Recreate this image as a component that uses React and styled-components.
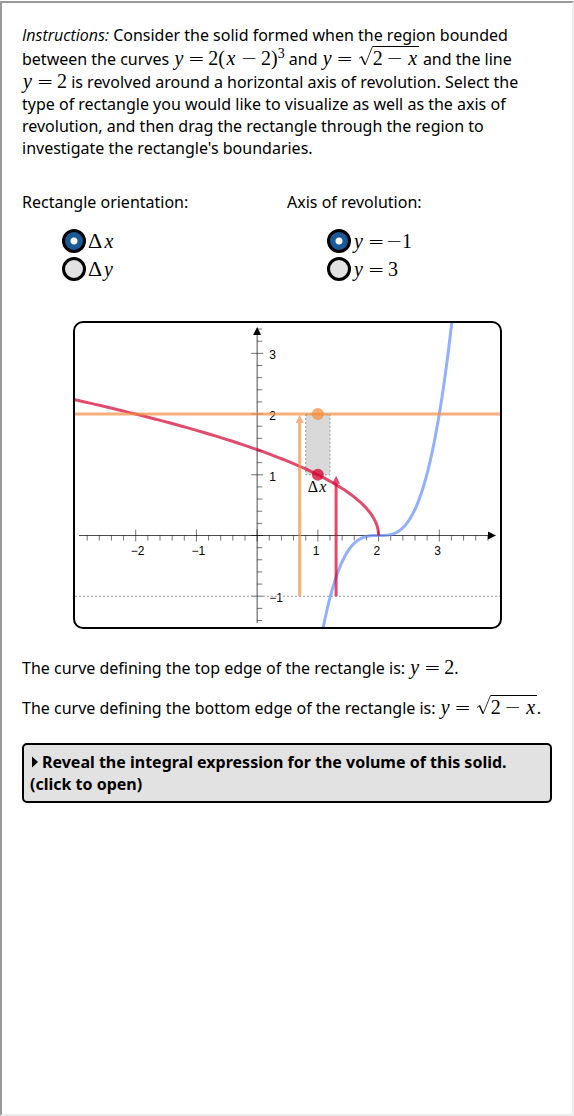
import React, { useState } from "react";
import styled, { createGlobalStyle } from "styled-components";

const GlobalStyle = createGlobalStyle`
  *, *::before, *::after { box-sizing: border-box; }
  body {
    margin: 0;
    padding-top: 1px;
    background: #fff;
    color: #000;
    font: 16px/22px "Noto Sans", "Open Sans", sans-serif;
  }
`;

const Frame = styled.main`
  min-height: calc(100vh - 1px);
  padding: 21px 20px;
  border: 2px solid;
  border-color: #9a9a9a #ededed #ededed #9a9a9a;
`;

const Paragraph = styled.p`
  margin: 0 0 16px;
`;

const Lead = styled.em`
  font-family: "Open Sans", sans-serif;
`;

const Formula = styled.span`
  display: inline-flex;
  align-items: baseline;
  height: ${(p) => (p.$tall ? "24px" : "22px")};
  line-height: ${(p) => (p.$tall ? "24px" : "22px")};
  font-family: "Liberation Serif", serif;
  font-size: 20px;
  white-space: nowrap;
`;

const Variable = styled.i`
  min-width: ${(p) => p.$width}px;
  text-align: center;
`;

const Delta = styled.span`
  width: 15px;
  font-size: 22px;
`;

const Operator = styled.span`
  display: flex;
  justify-content: center;
  width: 16px;
  margin: 0 ${(p) => (p.$unary ? "0 0 -2px" : "4px")};
  font-family: "DejaVu Sans", sans-serif;
  font-weight: 200;
  font-size: 20px;
`;

const Power = styled.sup`
  align-self: flex-start;
  font-size: 14px;
  line-height: 14px;
`;

const Root = styled.span`
  display: inline-flex;
  align-items: baseline;
`;

const RadicalSign = styled.svg`
  width: 16px;
  height: 20px;
  align-self: flex-start;
  flex: none;
`;

const Radicand = styled.span`
  display: inline-flex;
  align-items: baseline;
  border-top: 1px solid #000;
  line-height: 22px;
`;

const Choices = styled.form`
  display: grid;
  grid-template-columns: 1fr 1fr;
  margin-top: 32px;
`;

const ChoiceGroup = styled.fieldset`
  min-width: 0;
  margin: 0;
  padding: 0;
  border: 0;
`;

const GroupTitle = styled.legend`
  padding: 0;
  margin-bottom: 14px;
`;

const Choice = styled.label`
  display: flex;
  align-items: center;
  gap: 2px;
  height: 28px;
  margin-left: 40px;
`;

const Radio = styled.input`
  appearance: none;
  width: 24px;
  height: 24px;
  margin: 0;
  border: 3px solid #000;
  border-radius: 50%;
  background: #e2e2e2;

  &:checked {
    background: radial-gradient(circle, #fff 0 3px, #1a5a99 4px);
  }
`;

const GraphArea = styled.div`
  margin: 38px 0 27px;
  padding: 0 50px 0 51px;
`;

const Graph = styled.svg`
  display: block;
  width: 100%;
  border: 2px solid #000;
  border-radius: 10px;
`;

const TickLabel = styled.text`
  font: 12px "Liberation Sans", Arial, sans-serif;
`;

const WidthLabel = styled.text`
  font: 16px "Liberation Serif", serif;
`;

const Reveal = styled.details`
  margin-top: 24px;
  padding: 6px;
  border: 2px solid #000;
  border-radius: 5px;
  background: #e2e2e2;
  font-weight: 700;
`;

const RevealTitle = styled.summary`
  display: block;
  cursor: pointer;
`;

const Disclosure = styled.svg`
  width: 8px;
  height: 12px;
  margin-right: 4px;
`;

const Y = () => <Variable $width={11}>y</Variable>;
const X = () => <Variable $width={12}>x</Variable>;
const Eq = () => <Operator>=</Operator>;
const Minus = ({ unary }) => <Operator $unary={unary}>−</Operator>;

const SquareRoot = ({ children }) => (
  <Root>
    <RadicalSign viewBox="0 0 16 20" fill="none" stroke="#000" aria-hidden="true">
      <path d="M2 12.5 4.5 10.5" strokeWidth="0.8" />
      <path d="M4.5 10.5 8 18.5" strokeWidth="1.5" />
      <path d="M8 19 15.5 .5H16" strokeWidth="0.8" />
    </RadicalSign>
    <Radicand>{children}</Radicand>
  </Root>
);

const RootFormula = () => (
  <Formula $tall>
    <Y /><Eq /><SquareRoot>2<Minus /><X /></SquareRoot>
  </Formula>
);

const UNIT = 425 / 7;
const px = (x) => (x + 3) * UNIT;
const py = (y) => (3.5 - y) * UNIT;
const range = (from, to, step) =>
  Array.from({ length: Math.round((to - from) / step) + 1 }, (_, i) => from + i * step);
const trace = (points) => "M" + points.map(([x, y]) => `${px(x)} ${py(y)}`).join("L");

const RED = "#d4002d";
const ORANGE = "#f49042";
const BLUE = "#648fff";

const cubic = trace(range(1, 3.3, 0.02).map((x) => [x, 2 * (x - 2) ** 3]));
const root = trace(range(0, 2.3, 0.02).map((y) => [2 - y * y, y]));
const isWhole = (v) => Math.abs(v - Math.round(v)) < 0.01;
const label = (v) => String(v).replace("-", "−");

const Arrow = ({ x, top, color }) => (
  <g opacity="0.7" stroke={color} fill={color}>
    <path d={`M${px(x)} ${py(-1)}V${py(top) + 8}`} strokeWidth="3" />
    <path d={`M${px(x)} ${py(top) + 1}l4 8h-8z`} stroke="none" />
  </g>
);

const RegionGraph = () => (
  <Graph viewBox="0 0 425 304" role="img" aria-label="Region bounded by the two curves and the line">
    <g stroke="#000" strokeOpacity="0.7" fill="none">
      <path d={`M4 ${py(0)}H414`} />
      <path d={`M${px(0)} 300V11`} />
      {range(-2.8, 3.8, 0.2).map((x) => (
        <path key={x} strokeOpacity="0.55" d={`M${px(x)} ${py(0) - (isWhole(x) ? 6 : 0)}V${py(0) + (isWhole(x) ? 6 : 5)}`} />
      ))}
      {range(-1.4, 3.4, 0.2).map((y) => (
        <path key={y} strokeOpacity="0.55" d={`M${px(0) - (isWhole(y) ? 6 : 0)} ${py(y)}H${px(0) + (isWhole(y) ? 6 : 5)}`} />
      ))}
    </g>
    <path d={`M421 ${py(0)}l-8 -4v8z`} />
    <path d={`M${px(0)} 4l4 8h-8z`} />
    {[-2, -1, 1, 2, 3].map((x) => (
      <TickLabel key={x} x={px(x) - 5} y={py(0) + 19}>{label(x)}</TickLabel>
    ))}
    {[-1, 1, 2, 3].map((y) => (
      <TickLabel key={y} x={px(0) + 12} y={py(y) + 6}>{label(y)}</TickLabel>
    ))}
    <path d={`M0 ${py(-1)}H425`} stroke="#999" strokeDasharray="2 2" />
    <rect x={px(0.8)} y={py(2)} width={0.4 * UNIT} height={UNIT} fill="#d9d9d9" stroke="#999" strokeDasharray="2 2" />
    <path d={cubic} fill="none" stroke={BLUE} strokeWidth="3" opacity="0.7" />
    <path d={root} fill="none" stroke={RED} strokeWidth="3" opacity="0.7" />
    <path d={`M0 ${py(2)}H425`} stroke={ORANGE} strokeWidth="3" opacity="0.7" />
    <Arrow x={0.7} top={2} color={ORANGE} />
    <Arrow x={1.3} top={1} color={RED} />
    <circle cx={px(1)} cy={py(2)} r="6" fill={ORANGE} opacity="0.75" />
    <circle cx={px(1)} cy={py(1)} r="6" fill={RED} opacity="0.75" />
    <WidthLabel x={px(1) - 10} y={py(1) + 17}>
      Δ<tspan fontStyle="italic" dx="1">x</tspan>
    </WidthLabel>
  </Graph>
);

export default function App() {
  const [orientation, setOrientation] = useState("dx");
  const [axis, setAxis] = useState("-1");
  return (
    <>
      <GlobalStyle />
      <Frame>
        <Paragraph>
          <Lead>Instructions:</Lead> Consider the solid formed when the region bounded between the curves{" "}
          <Formula>
            <Y /><Eq />2(<X /><Minus />2)<Power>3</Power>
          </Formula>{" "}
          and <RootFormula /> and the line{" "}
          <Formula><Y /><Eq />2</Formula> is revolved around a horizontal axis of revolution. Select the type of
          rectangle you would like to visualize as well as the axis of revolution, and then drag the rectangle through
          the region to investigate the rectangle's boundaries.
        </Paragraph>

        <Choices>
          <ChoiceGroup>
            <GroupTitle>Rectangle orientation:</GroupTitle>
            <Choice>
              <Radio type="radio" name="orientation" checked={orientation === "dx"} onChange={() => setOrientation("dx")} />
              <Formula><Delta>Δ</Delta><X /></Formula>
            </Choice>
            <Choice>
              <Radio type="radio" name="orientation" checked={orientation === "dy"} onChange={() => setOrientation("dy")} />
              <Formula><Delta>Δ</Delta><Y /></Formula>
            </Choice>
          </ChoiceGroup>
          <ChoiceGroup>
            <GroupTitle>Axis of revolution:</GroupTitle>
            <Choice>
              <Radio type="radio" name="axis" checked={axis === "-1"} onChange={() => setAxis("-1")} />
              <Formula><Y /><Eq /><Minus unary />1</Formula>
            </Choice>
            <Choice>
              <Radio type="radio" name="axis" checked={axis === "3"} onChange={() => setAxis("3")} />
              <Formula><Y /><Eq />3</Formula>
            </Choice>
          </ChoiceGroup>
        </Choices>

        <GraphArea>
          <RegionGraph />
        </GraphArea>

        <Paragraph>
          The curve defining the top edge of the rectangle is: <Formula><Y /><Eq />2</Formula>.
        </Paragraph>
        <Paragraph>
          The curve defining the bottom edge of the rectangle is: <RootFormula />.
        </Paragraph>

        <Reveal>
          <RevealTitle>
            <Disclosure viewBox="0 0 8 12" aria-hidden="true">
              <path d="M2 .5 8 6 2 11.5z" />
            </Disclosure>
            Reveal the integral expression for the volume of this solid. (click to open)
          </RevealTitle>
        </Reveal>
      </Frame>
    </>
  );
}
